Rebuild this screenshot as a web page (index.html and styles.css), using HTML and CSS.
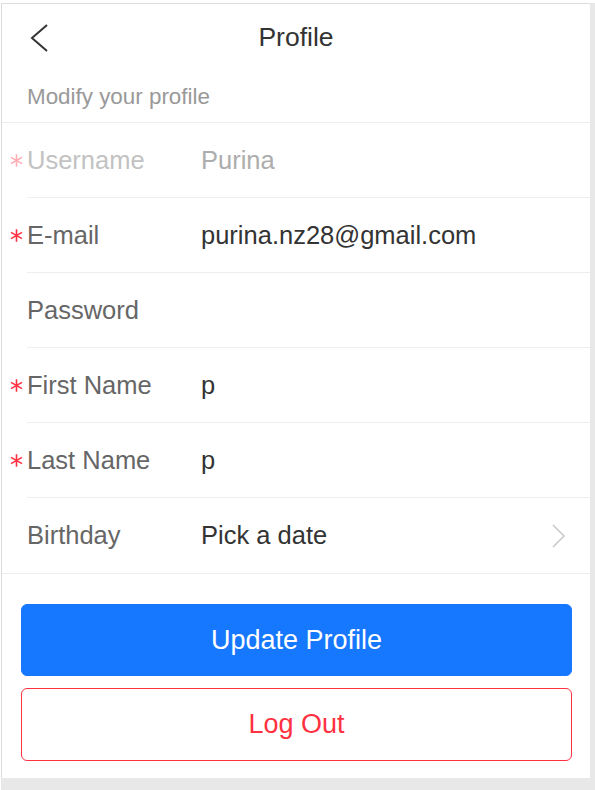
FILE: index.html
```html
<!DOCTYPE html>
<html lang="en">
<head>
<meta charset="utf-8">
<title>Profile</title>
<link rel="stylesheet" href="styles.css">
</head>
<body>
<div class="stage">
  <div class="card">
    <header class="navbar">
      <span class="back" aria-label="Back">
        <svg width="18" height="28" viewBox="0 0 18 28"><polyline points="17,1 2,14 17,27" fill="none" stroke="#333" stroke-width="2"/></svg>
      </span>
      <div class="title">Profile</div>
      <span></span>
    </header>
    <div class="list-header">Modify your profile</div>
    <div class="list">
      <div class="item disabled">
        <div class="item-inner">
          <div class="label"><svg class="ast" width="13" height="13" viewBox="0 0 13 13"><path d="M6.5 0.3V12.7M1 3.4L12 9.6M1 9.6L12 3.4" stroke="currentColor" stroke-width="1.6"/></svg>Username</div>
          <div class="value">Purina</div>
        </div>
      </div>
      <div class="item">
        <div class="item-inner">
          <div class="label"><svg class="ast" width="13" height="13" viewBox="0 0 13 13"><path d="M6.5 0.3V12.7M1 3.4L12 9.6M1 9.6L12 3.4" stroke="currentColor" stroke-width="1.6"/></svg>E-mail</div>
          <div class="value">purina.nz28@gmail.com</div>
        </div>
      </div>
      <div class="item">
        <div class="item-inner">
          <div class="label">Password</div>
          <div class="value"></div>
        </div>
      </div>
      <div class="item">
        <div class="item-inner">
          <div class="label"><svg class="ast" width="13" height="13" viewBox="0 0 13 13"><path d="M6.5 0.3V12.7M1 3.4L12 9.6M1 9.6L12 3.4" stroke="currentColor" stroke-width="1.6"/></svg>First Name</div>
          <div class="value">p</div>
        </div>
      </div>
      <div class="item">
        <div class="item-inner">
          <div class="label"><svg class="ast" width="13" height="13" viewBox="0 0 13 13"><path d="M6.5 0.3V12.7M1 3.4L12 9.6M1 9.6L12 3.4" stroke="currentColor" stroke-width="1.6"/></svg>Last Name</div>
          <div class="value">p</div>
        </div>
      </div>
      <div class="item last">
        <div class="item-inner">
          <div class="label">Birthday</div>
          <div class="value">Pick a date</div>
          <svg class="arrow" width="14" height="24" viewBox="0 0 14 24"><polyline points="1,1 12,12 1,23" fill="none" stroke="#c8c8c8" stroke-width="1.5"/></svg>
        </div>
      </div>
    </div>
    <div class="footer">
      <button class="btn primary">Update Profile</button>
      <button class="btn danger">Log Out</button>
    </div>
  </div>
</div>
</body>
</html>
```

FILE: styles.css
```css
* { box-sizing: border-box; }
html, body { margin: 0; }
body {
  padding: 3px 0 0 1px;
  background: #fff;
  font-family: "Liberation Sans", Arial, sans-serif;
  width: 595px;
}
.stage {
  background: #e8e8e8;
  padding: 0 5px 12px 0;
}
.card {
  background: #fff;
  border-top: 1px solid #dedede;
  border-left: 1px solid #dcdcdc;
}
.navbar {
  height: 67px;
  display: grid;
  grid-template-columns: 1fr auto 1fr;
  align-items: center;
}
.back {
  display: flex;
  padding-left: 28px;
  padding-top: 1px;
}
.title {
  font-size: 26.5px;
  color: #333;
}
.list-header {
  padding: 9px 25px 8px;
  font-size: 22.4px;
  line-height: 34px;
  color: #999;
}
.list {
  border-top: 1px solid #eee;
  border-bottom: 1px solid #eee;
}
.item { padding-left: 25px; }
.item-inner {
  height: 75px;
  border-bottom: 1px solid #eee;
  display: flex;
  align-items: center;
  padding-right: 24px;
  font-size: 25.5px;
}
.item.last .item-inner { border-bottom: none; height: 75px; }
.label {
  position: relative;
  width: 174px;
  flex: none;
  color: #666;
}
.ast {
  position: absolute;
  left: -17px;
  top: 50%;
  margin-top: -6px;
  color: #ff3141;
}
.value {
  flex: 1;
  color: #333;
}
.disabled .label { color: #c2c2c2; }
.disabled .value { color: #adadad; }
.disabled .ast { color: #ffadb3; }
.arrow { flex: none; }
.footer {
  padding: 30px 18px 17px 19px;
  display: flex;
  flex-direction: column;
  gap: 12px;
}
.btn {
  font-family: inherit;
  font-size: 27px;
  border-radius: 6px;
  width: 100%;
  cursor: pointer;
}
.btn.primary {
  height: 72px;
  background: #1677ff;
  border: 1px solid #1677ff;
  color: #fff;
}
.btn.danger {
  height: 73px;
  background: #fff;
  border: 1px solid #ff3141;
  color: #ff3141;
}
```
